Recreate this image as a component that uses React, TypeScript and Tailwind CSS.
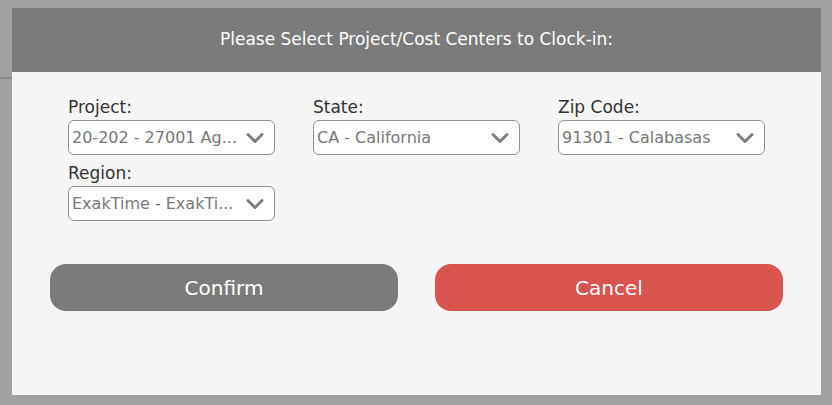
import React from "react";

function Chevron() {
  return (
    <svg width="18" height="12" viewBox="0 0 18 12" className="shrink-0">
      <polyline points="2,2.5 9,9.5 16,2.5" fill="none" stroke="#7d7d7d" strokeWidth="3" strokeLinecap="round" strokeLinejoin="round" />
    </svg>
  );
}

function Field({ label, value }: { label: string; value: string }) {
  return (
    <div className="flex flex-col w-[207px]">
      <div className="text-[17px] leading-[20px] text-[#333] mb-[4px] pt-[1px] h-[21px]">{label}</div>
      <div className="h-[35px] border border-[#8f8f8f] rounded-[6px] bg-white flex items-center pl-[3px] pr-[10px] mt-[-1px]">
        <span className="flex-1 text-[16px] text-[#777] whitespace-nowrap overflow-hidden">{value}</span>
        <Chevron />
      </div>
    </div>
  );
}

export default function App() {
  return (
    <div className="w-[832px] h-[405px] bg-[#a1a1a1] relative overflow-hidden" style={{ fontFamily: '"DejaVu Sans", sans-serif' }}>
      <div className="absolute left-0 top-[77px] w-[12px] h-[2px] bg-[#8a8a8a]" />
      <div className="absolute left-[12px] top-[8px] w-[809px] h-[387px] flex flex-col">
        <div className="h-[64px] bg-[#7b7b7b] flex items-center justify-center text-white text-[17px]">
          Please Select Project/Cost Centers to Clock-in:
        </div>
        <div className="flex-1 bg-[#f5f5f5] flex flex-col">
          <div className="pl-[56px] pt-[24px] grid grid-cols-[207px_207px_207px] gap-x-[38px] gap-y-[7px]">
            <Field label="Project:" value="20-202 - 27001 Ag..." />
            <Field label="State:" value="CA - California" />
            <Field label="Zip Code:" value="91301 - Calabasas" />
            <Field label="Region:" value="ExakTime - ExakTi..." />
          </div>
          <div className="pl-[38px] pt-[43px] flex gap-[37px]">
            <button className="w-[348px] h-[47px] rounded-[16px] bg-[#7b7b7b] text-white text-[20px]">Confirm</button>
            <button className="w-[348px] h-[47px] rounded-[16px] bg-[#d9534f] text-white text-[20px]">Cancel</button>
          </div>
        </div>
      </div>
    </div>
  );
}
